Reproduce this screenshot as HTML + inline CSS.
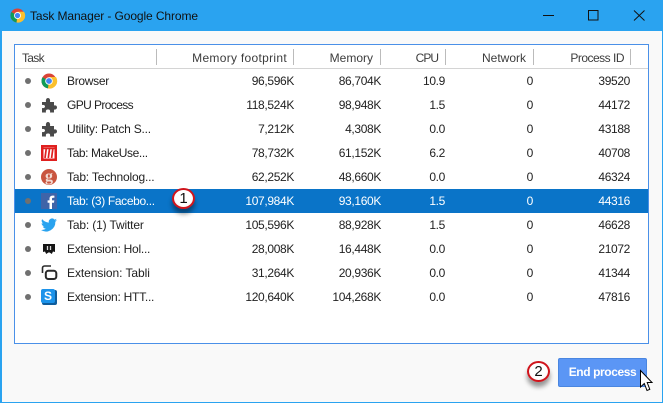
<!DOCTYPE html>
<html><head><meta charset="utf-8"><style>
html,body{margin:0;padding:0}
body{width:663px;height:403px;position:relative;overflow:hidden;background:#f9f9f9;font-family:"Liberation Sans",sans-serif;font-size:12px;color:#222}
.a{position:absolute}
.t{position:absolute;white-space:nowrap;line-height:14px}
.r{text-align:right;width:90px;letter-spacing:-.35px}
.h{color:#3c3c3c;letter-spacing:0}
.s{position:absolute;top:49px;width:1px;height:16px;background:#bbb}
.b{position:absolute;left:25px;width:6px;height:6px;border-radius:50%;background:#707070}
svg{position:absolute;overflow:visible}
.num{position:absolute;width:19px;height:17px;border-radius:50%;background:radial-gradient(circle at 50% 45%,#fff 60%,#ecd4d4);border:2px solid #d0141c;box-shadow:0 5px 5px rgba(0,0,0,.4);text-align:center;font-size:15px;line-height:17px;color:#111}
</style></head><body>
<div class="a" style="left:0;top:0;width:663px;height:31px;background:#2aa3f0"></div>
<div class="a" style="left:0;top:31px;width:2px;height:372px;background:#2aa3f0"></div>
<div class="a" style="right:0;top:31px;width:1px;height:372px;background:#2aa3f0"></div>
<div class="a" style="left:0;top:402px;width:663px;height:1px;background:#2aa3f0"></div>

<svg style="left:10px;top:8px" width="15" height="15" viewBox="0 0 16 16"><circle cx="8" cy="8" r="7.5" fill="#db4437"/><path d="M8 8L1.5 4.2A7.5 7.5 0 0 0 7 15.4Z" fill="#0f9d58"/><path d="M8 4H15A7.5 7.5 0 0 1 7 15.4L8 8Z" fill="#fbc02d"/><circle cx="8" cy="8" r="3.7" fill="#fff"/><circle cx="8" cy="8" r="2.8" fill="#4285f4"/></svg>
<div class="t" style="left:30px;top:9px;font-size:12px;letter-spacing:-.1px;color:#111">Task Manager - Google Chrome</div>
<svg style="left:0;top:0" width="663" height="31"><path d="M543 15.5H554" stroke="#111" stroke-width="1"/><rect x="588.5" y="10.5" width="9.5" height="9.5" fill="none" stroke="#111"/><path d="M634 10.5L644.500 20.500M644.500 10.5L634 20.500" stroke="#111"/></svg>

<div class="a" style="left:14px;top:44px;width:633px;height:298px;background:#fff;border:1px solid #4a90e8"></div>
<div class="a" style="left:15px;top:68px;width:633px;height:1px;background:#d4d4d4"></div>
<div class="a" style="left:15px;top:189px;width:633px;height:24px;background:#0a74c8"></div>

<div class="t h" style="left:22px;top:51px;letter-spacing:-.7px">Task</div>
<div class="t h r" style="left:177px;top:51px;width:110px;letter-spacing:.3px">Memory footprint</div>
<div class="t h r" style="left:283px;top:51px">Memory</div>
<div class="t h r" style="left:348px;top:51px;letter-spacing:-1px">CPU</div>
<div class="t h r" style="left:436px;top:51px">Network</div>
<div class="t h r" style="left:534px;top:51px;letter-spacing:-.5px">Process ID</div>
<div class="s" style="left:156px"></div><div class="s" style="left:293px"></div><div class="s" style="left:380px"></div><div class="s" style="left:445px"></div><div class="s" style="left:533px"></div><div class="s" style="left:630px"></div>

<div class="b" style="top:78px"></div><div class="b" style="top:102px"></div><div class="b" style="top:126px"></div><div class="b" style="top:150px"></div><div class="b" style="top:174px"></div><div class="b" style="top:198px"></div><div class="b" style="top:222px"></div><div class="b" style="top:246px"></div><div class="b" style="top:270px"></div><div class="b" style="top:294px"></div>

<!-- icons -->
<svg style="left:41px;top:73px" width="16" height="16" viewBox="0 0 16 16"><circle cx="8" cy="8" r="7.5" fill="#db4437"/><path d="M8 8L1.5 4.2A7.5 7.5 0 0 0 7 15.4Z" fill="#0f9d58"/><path d="M8 4H15A7.5 7.5 0 0 1 7 15.4L8 8Z" fill="#fbc02d"/><circle cx="8" cy="8" r="3.8" fill="#fff"/><circle cx="8" cy="8" r="2.9" fill="#4285f4"/></svg>
<svg style="left:41px;top:97px" width="16" height="16" viewBox="0 0 16 16"><path d="M1 5H5C4.500 2.500 5.500 1 7 1S9.500 2.500 9 5H13V8.500C15.500 8 16 9.500 16 10.500S15 13 13 12.500V15.500H9C9.500 13 8.500 12.500 7 12.500S4.500 13 5 15.500H1V11C3 11.500 4 10.500 4 9.500S3 7.500 1 8Z" fill="#4a4a4a"/></svg>
<svg style="left:41px;top:121px" width="16" height="16" viewBox="0 0 16 16"><path d="M1 5H5C4.500 2.500 5.500 1 7 1S9.500 2.500 9 5H13V8.500C15.500 8 16 9.500 16 10.500S15 13 13 12.500V15.500H9C9.500 13 8.500 12.500 7 12.500S4.500 13 5 15.500H1V11C3 11.500 4 10.500 4 9.500S3 7.500 1 8Z" fill="#4a4a4a"/></svg>
<svg style="left:41px;top:145px" width="16" height="16" viewBox="0 0 16 16"><rect width="16" height="16" fill="#e0201f"/><rect x="2.500" y="2.500" width="11" height="11" fill="#fff"/><path d="M2.500 3.500H13.500" stroke="#e0201f" stroke-width="1.500"/><path d="M4 13L5.200 4M7.300 13L8.500 4M10.600 13L11.800 4" stroke="#e0201f" stroke-width="1.700" fill="none"/></svg>
<svg style="left:41px;top:169px" width="16" height="16" viewBox="0 0 16 16"><circle cx="8" cy="8" r="8" fill="#c9553f"/><text x="8" y="12" text-anchor="middle" font-family="Liberation Serif,serif" font-size="16" font-weight="bold" fill="#f2dcd4">g</text></svg>
<svg style="left:41px;top:193px" width="16" height="16" viewBox="0 0 16 16"><rect width="16" height="16" fill="#3f64a8"/><path d="M11 16V9.800H13L13.300 7.400H11V6C11 5.200 11.300 4.800 12.300 4.800H13.400V2.700C13 2.600 12.300 2.600 11.600 2.600C9.800 2.600 8.500 3.700 8.500 5.700V7.400H6.600V9.800H8.500V16Z" fill="#fff"/></svg>
<svg style="left:41px;top:217px" width="16" height="16" viewBox="0 0 24 24"><path d="M24 4.600a9.800 9.800 0 0 1-2.800.8 4.900 4.900 0 0 0 2.100-2.700 9.800 9.800 0 0 1-3.100 1.200 4.900 4.900 0 0 0-8.400 4.500A14 14 0 0 1 1.700 3.200a4.900 4.900 0 0 0 1.500 6.600 4.900 4.900 0 0 1-2.200-.6 4.900 4.900 0 0 0 3.900 4.800 4.900 4.900 0 0 1-2.200.1 4.900 4.900 0 0 0 4.600 3.400A9.900 9.900 0 0 1 0 19.500 14 14 0 0 0 21.500 7.100 10 10 0 0 0 24 4.600Z" fill="#2aa3ef"/></svg>
<svg style="left:41px;top:241px" width="16" height="16" viewBox="0 0 16 16"><path d="M2 3H14V11L12 10.500L10.800 13L8.700 11.500H7.300L5.200 13L4 10.500L2 11Z" fill="#151515"/><path d="M6.500 5V9M9.500 5V9" stroke="#d8d8d8" stroke-width="1.300"/></svg>
<svg style="left:41px;top:265px" width="16" height="16" viewBox="0 0 16 16" fill="none" stroke="#2a2a2a" stroke-width="1.600"><path d="M1.500 8V3A2 2 0 0 1 3.500 1H10"/><rect x="4.800" y="5.800" width="10.500" height="8.200" rx="2.500" stroke-width="2"/></svg>
<svg style="left:41px;top:289px" width="16" height="16" viewBox="0 0 16 16"><rect x="1" y="1" width="15" height="15" rx="2" fill="#0f5d9c"/><rect width="14" height="14" rx="2" fill="#1c93ea"/><text x="7" y="11" text-anchor="middle" font-size="12" font-weight="bold" fill="#fff">S</text></svg>

<!-- rows -->
<div class="t" style="left:67px;top:74px;letter-spacing:-.3px">Browser</div>
<div class="t r" style="left:204px;top:74px">96,596K</div><div class="t r" style="left:291px;top:74px">86,704K</div><div class="t r" style="left:355px;top:74px">10.9</div><div class="t r" style="left:443px;top:74px">0</div><div class="t r" style="left:540px;top:74px">39520</div>
<div class="t" style="left:67px;top:98px;letter-spacing:-.6px">GPU Process</div>
<div class="t r" style="left:204px;top:98px">118,524K</div><div class="t r" style="left:291px;top:98px">98,948K</div><div class="t r" style="left:355px;top:98px">1.5</div><div class="t r" style="left:443px;top:98px">0</div><div class="t r" style="left:540px;top:98px">44172</div>
<div class="t" style="left:67px;top:122px;letter-spacing:-.22px">Utility: Patch S...</div>
<div class="t r" style="left:204px;top:122px">7,212K</div><div class="t r" style="left:291px;top:122px">4,308K</div><div class="t r" style="left:355px;top:122px">0.0</div><div class="t r" style="left:443px;top:122px">0</div><div class="t r" style="left:540px;top:122px">43188</div>
<div class="t" style="left:67px;top:146px;letter-spacing:-.4px">Tab: MakeUse...</div>
<div class="t r" style="left:204px;top:146px">78,732K</div><div class="t r" style="left:291px;top:146px">61,152K</div><div class="t r" style="left:355px;top:146px">6.2</div><div class="t r" style="left:443px;top:146px">0</div><div class="t r" style="left:540px;top:146px">40708</div>
<div class="t" style="left:67px;top:170px;letter-spacing:-.18px">Tab: Technolog...</div>
<div class="t r" style="left:204px;top:170px">62,252K</div><div class="t r" style="left:291px;top:170px">48,660K</div><div class="t r" style="left:355px;top:170px">0.0</div><div class="t r" style="left:443px;top:170px">0</div><div class="t r" style="left:540px;top:170px">46324</div>
<div style="color:#fff">
<div class="t" style="left:67px;top:194px;letter-spacing:-.35px">Tab: (3) Facebo...</div>
<div class="t r" style="left:204px;top:194px">107,984K</div><div class="t r" style="left:291px;top:194px">93,160K</div><div class="t r" style="left:355px;top:194px">1.5</div><div class="t r" style="left:443px;top:194px">0</div><div class="t r" style="left:540px;top:194px">44316</div>
</div>
<div class="t" style="left:67px;top:218px;letter-spacing:-.15px">Tab: (1) Twitter</div>
<div class="t r" style="left:204px;top:218px">105,596K</div><div class="t r" style="left:291px;top:218px">88,928K</div><div class="t r" style="left:355px;top:218px">1.5</div><div class="t r" style="left:443px;top:218px">0</div><div class="t r" style="left:540px;top:218px">46628</div>
<div class="t" style="left:67px;top:242px;letter-spacing:-.25px">Extension: Hol...</div>
<div class="t r" style="left:204px;top:242px">28,008K</div><div class="t r" style="left:291px;top:242px">16,448K</div><div class="t r" style="left:355px;top:242px">0.0</div><div class="t r" style="left:443px;top:242px">0</div><div class="t r" style="left:540px;top:242px">21072</div>
<div class="t" style="left:67px;top:266px;letter-spacing:-.06px">Extension: Tabli</div>
<div class="t r" style="left:204px;top:266px">31,264K</div><div class="t r" style="left:291px;top:266px">20,936K</div><div class="t r" style="left:355px;top:266px">0.0</div><div class="t r" style="left:443px;top:266px">0</div><div class="t r" style="left:540px;top:266px">41344</div>
<div class="t" style="left:67px;top:290px;letter-spacing:-.25px">Extension: HTT...</div>
<div class="t r" style="left:204px;top:290px">120,640K</div><div class="t r" style="left:291px;top:290px">104,268K</div><div class="t r" style="left:355px;top:290px">0.0</div><div class="t r" style="left:443px;top:290px">0</div><div class="t r" style="left:540px;top:290px">47816</div>

<div class="num" style="left:172px;top:188px">1</div>
<div class="num" style="left:527px;top:361px">2</div>

<div class="a" style="left:558px;top:358px;width:87px;height:27px;background:#5b96f5;border:1px solid #4a86e0;border-radius:2px;color:#fff;font-weight:bold;text-align:center;line-height:26px;font-size:12px;letter-spacing:-.4px">End process</div>
<svg style="left:640px;top:370px" width="13" height="22" viewBox="0 0 13 22"><path d="M.5 .5V17L4.300 13.500L7 20.500L9.800 19.300L7.200 12.500H12Z" fill="#fff" stroke="#000" stroke-width="1"/></svg>
</body></html>
